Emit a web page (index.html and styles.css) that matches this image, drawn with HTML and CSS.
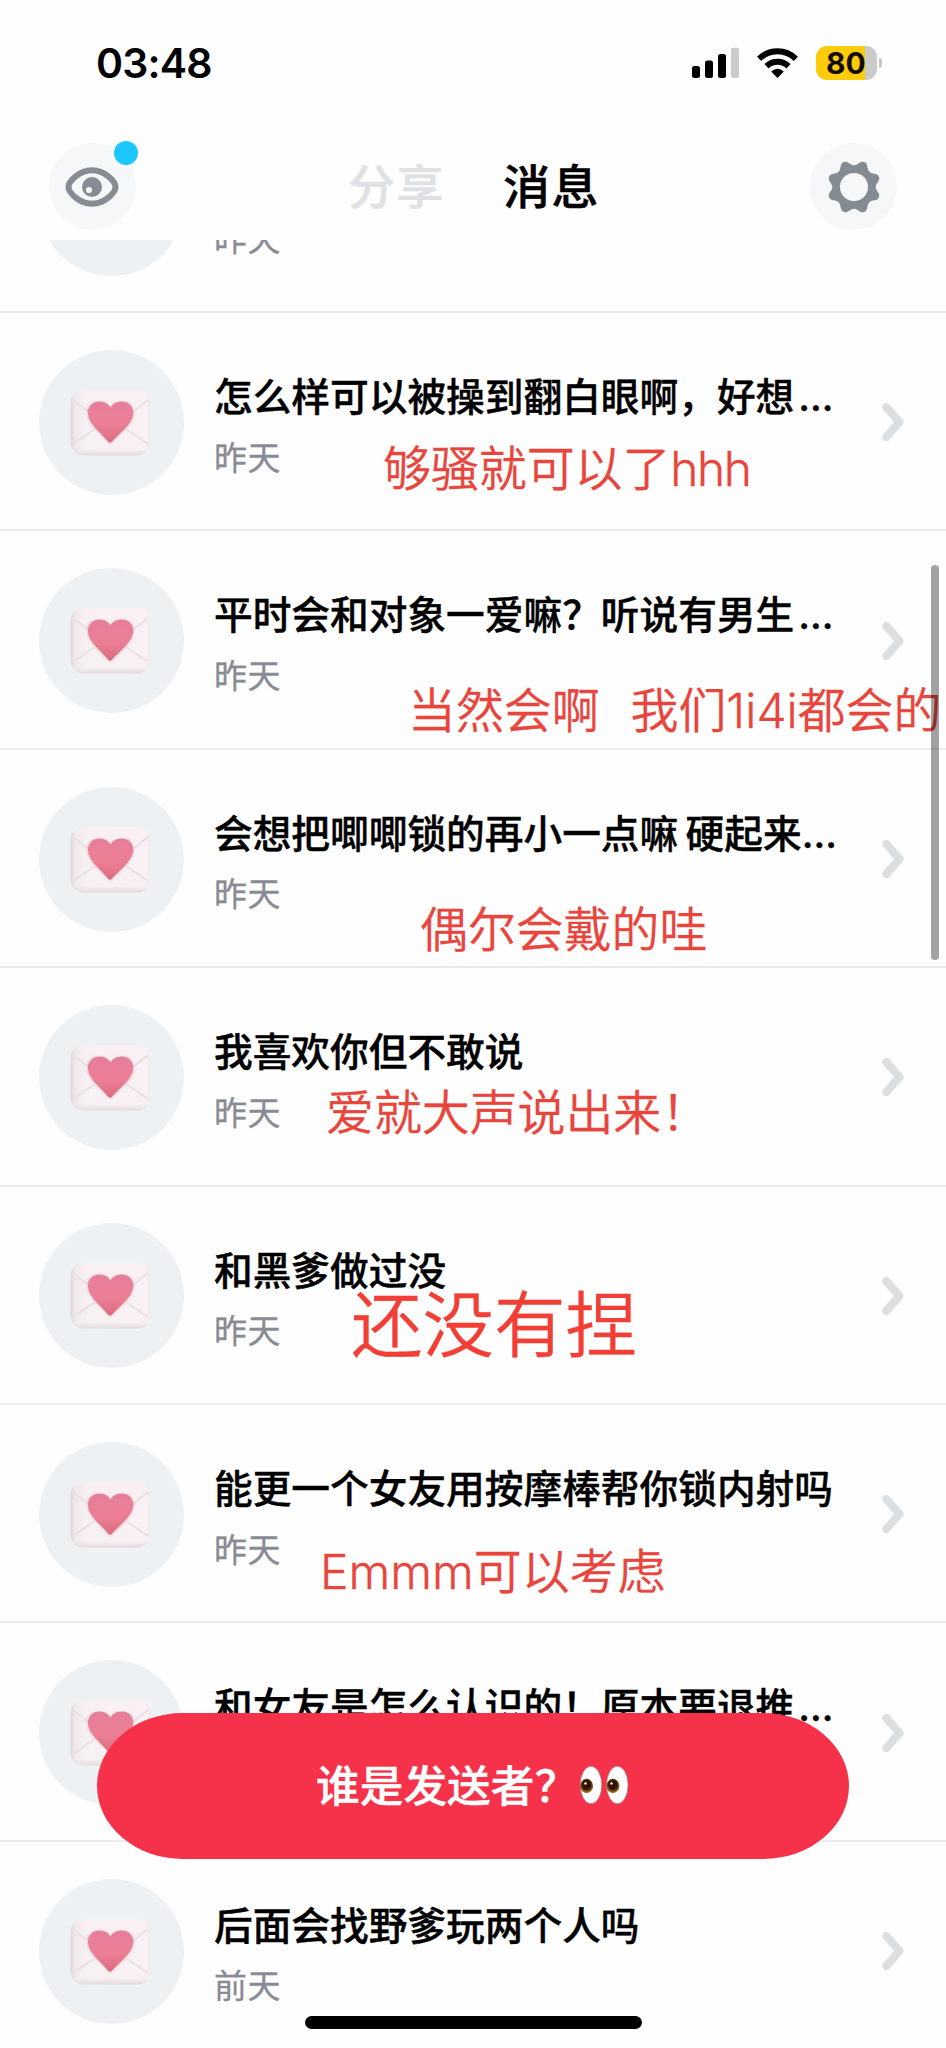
FILE: index.html
```html
<!DOCTYPE html>
<html lang="zh-CN">
<head>
<meta charset="utf-8">
<title>消息</title>
<link rel="stylesheet" href="styles.css">
</head>
<body>
<svg class="defs" width="0" height="0">
  <defs>
    <linearGradient id="paper" x1="0" y1="0" x2="0" y2="1">
      <stop offset="0" stop-color="#faf0f4"/><stop offset=".9" stop-color="#f8f1f3"/><stop offset="1" stop-color="#e2d9dc"/>
    </linearGradient>
    <linearGradient id="edge" x1="0" y1="0" x2="1" y2="0">
      <stop offset="0" stop-color="#d2cbcd" stop-opacity=".7"/><stop offset=".06" stop-color="#e6e1e3" stop-opacity=".5"/><stop offset=".25" stop-color="#f2f0f0" stop-opacity=".1"/><stop offset=".93" stop-color="#eee" stop-opacity="0"/><stop offset="1" stop-color="#e4e0e3" stop-opacity=".5"/>
    </linearGradient>
    <linearGradient id="heartfill" x1="0" y1="0" x2="0" y2="1">
      <stop offset="0" stop-color="#e67e9a"/><stop offset=".55" stop-color="#ec7f95"/><stop offset="1" stop-color="#dc6c80"/>
    </linearGradient>
    <radialGradient id="iris" cx=".5" cy=".42" r=".56">
      <stop offset="0" stop-color="#240c04"/><stop offset=".55" stop-color="#361406"/><stop offset=".8" stop-color="#7c5312"/><stop offset="1" stop-color="#a87f2a"/>
    </radialGradient>
    <filter id="soft" x="-20%" y="-20%" width="140%" height="140%"><feGaussianBlur stdDeviation="1.6"/></filter>
    <symbol id="letter" viewBox="0 0 145 145">
      <rect x="31.500" y="40" width="80" height="65.500" rx="13" fill="url(#paper)"/>
      <rect x="31.500" y="40" width="80" height="65.500" rx="13" fill="url(#edge)"/>
      <path d="M34 50L60 70M109 50L84 70M34 94L56 79M109 94L87 79" fill="none" stroke="#e8e0e3" stroke-width="1.800"/>
      <path d="M71.500 94C64 85 49 74 48.500 63.500C48 55 54 52 60 52C66 52 70 55 71.500 58.500C73 55 77 52 83 52C90 52 95 56 94.500 64C94 74 79 85 71.500 94Z" fill="#b98a94" opacity=".45" filter="url(#soft)"/>
      <path d="M73 91.500Q71 94 69 91.500C62 82.500 49.500 74.500 49 63.500C48.800 56 54 51.500 60.500 51.500C66 51.500 70 54.500 71.500 57.500C73 54.500 77 51.500 82.500 51.500C89.500 51.500 94.500 56 94.200 63.500C93.500 74.500 81 82.500 73 91.500Z" fill="url(#heartfill)"/>
    </symbol>
    <symbol id="chevron" viewBox="0 0 22 40"><path d="M4.300 5L17.500 20L4.300 35" fill="none" stroke="#dcdfe1" stroke-width="8" stroke-linecap="round" stroke-linejoin="round"/></symbol>
  </defs>
</svg>
<div class="screen">
  <header class="header">
    <div class="status">
      <span class="time">03:48</span>
      <div class="indicators">
        <svg class="signal" viewBox="0 0 48 32"><rect x="0" y="19" width="8" height="12" rx="2.500"/><rect x="13" y="13.500" width="8" height="17.500" rx="2.500"/><rect x="26" y="7" width="8" height="24" rx="2.500"/><rect x="39" y="0.700" width="8" height="30.300" rx="2.500" fill="#cbcbcb"/></svg>
        <svg class="wifi" viewBox="0 0 41 32"><g fill="none" stroke="#000" stroke-width="6"><path d="M2.200 11.800A26 26 0 0 1 38.800 11.800"/><path d="M9.500 19.200A16 16 0 0 1 31.500 19.200"/></g><path d="M14.200 24.500Q20.500 18.800 26.800 24.500L20.500 31Z"/></svg>
        <div class="battery"><span class="level">80</span></div>
      </div>
    </div>
    <nav class="nav">
      <button class="round">
        <svg class="eye" viewBox="0 0 54 40"><path d="M3.500 20C3.500 14.500 14 3.300 27 3.300S50.500 14.500 50.500 20S40 36.700 27 36.700S3.500 25.500 3.500 20Z" fill="none" stroke="#878b93" stroke-width="6" stroke-linejoin="round"/><circle cx="27" cy="20" r="10" fill="#878b93"/><circle cx="24" cy="23" r="3" fill="#f5f7f9"/></svg>
        <i class="badge"></i>
      </button>
      <div class="tabs"><span class="tab">分享</span><span class="tab active">消息</span></div>
      <button class="round">
        <svg class="gear" viewBox="-28 -28 56 56"><path d="M0,-21.700C4,-21.700 6.170,-26.660 10.330,-24.940C14.490,-23.220 12.510,-18.170 15.340,-15.340C18.170,-12.510 23.220,-14.490 24.940,-10.330C26.660,-6.170 21.700,-4 21.700,0C21.700,4 26.660,6.170 24.940,10.330C23.220,14.490 18.170,12.510 15.340,15.340C12.510,18.170 14.490,23.220 10.330,24.940C6.170,26.660 4,21.700 0,21.700C-4,21.700 -6.170,26.660 -10.330,24.940C-14.490,23.220 -12.510,18.170 -15.340,15.340C-18.170,12.510 -23.220,14.490 -24.940,10.330C-26.660,6.170 -21.700,4 -21.700,0C-21.700,-4 -26.660,-6.170 -24.940,-10.330C-23.220,-14.490 -18.170,-12.510 -15.340,-15.340C-12.510,-18.170 -14.490,-23.220 -10.330,-24.940C-6.170,-26.660 -4,-21.700 0,-21.700Z" fill="#858b93"/><circle r="14" fill="#f5f7f9"/></svg>
      </button>
    </nav>
  </header>

  <main class="list">
    <article class="row"><div class="avatar"></div><div class="body"><h2 class="title">&nbsp;</h2><p class="date">昨天</p></div></article>
    <article class="row"><div class="avatar"><svg><use href="#letter"/></svg></div><div class="body"><h2 class="title">怎么样可以被操到翻白眼啊，好想<span class="dots">…</span></h2><p class="date">昨天</p></div><svg class="chev"><use href="#chevron"/></svg><p class="note n1">够骚就可以了<span class="latin">hhh</span></p></article>
    <article class="row"><div class="avatar"><svg><use href="#letter"/></svg></div><div class="body"><h2 class="title">平时会和对象一爱嘛？听说有男生<span class="dots">…</span></h2><p class="date">昨天</p></div><svg class="chev"><use href="#chevron"/></svg><p class="note n2">当然会啊<span class="gap"></span>我们1i4i都会的</p></article>
    <article class="row"><div class="avatar"><svg><use href="#letter"/></svg></div><div class="body"><h2 class="title tight">会想把唧唧锁的再小一点嘛 硬起来…</h2><p class="date">昨天</p></div><svg class="chev"><use href="#chevron"/></svg><p class="note n3">偶尔会戴的哇</p></article>
    <article class="row"><div class="avatar"><svg><use href="#letter"/></svg></div><div class="body"><h2 class="title">我喜欢你但不敢说</h2><p class="date">昨天</p></div><svg class="chev"><use href="#chevron"/></svg><p class="note n4">爱就大声说出来！</p></article>
    <article class="row"><div class="avatar"><svg><use href="#letter"/></svg></div><div class="body"><h2 class="title">和黑爹做过没</h2><p class="date">昨天</p></div><svg class="chev"><use href="#chevron"/></svg><p class="note n5">还没有捏</p></article>
    <article class="row"><div class="avatar"><svg><use href="#letter"/></svg></div><div class="body"><h2 class="title">能更一个女友用按摩棒帮你锁内射吗</h2><p class="date">昨天</p></div><svg class="chev"><use href="#chevron"/></svg><p class="note n6">Emmm可以考虑</p></article>
    <article class="row"><div class="avatar"><svg><use href="#letter"/></svg></div><div class="body"><h2 class="title">和女友是怎么认识的！原本要退推<span class="dots">…</span></h2></div><svg class="chev"><use href="#chevron"/></svg></article>
    <article class="row"><div class="avatar"><svg><use href="#letter"/></svg></div><div class="body"><h2 class="title">后面会找野爹玩两个人吗</h2><p class="date">前天</p></div><svg class="chev"><use href="#chevron"/></svg></article>
  </main>

  <i class="scrollbar"></i>
  <button class="cta"><span>谁是发送者？</span><svg class="eyes" viewBox="0 0 50 40"><g stroke="#a8747c" stroke-width=".8"><ellipse cx="12" cy="20" rx="10.800" ry="18.800" fill="#fff"/><ellipse cx="38.300" cy="20" rx="10.800" ry="18.800" fill="#fff"/></g><ellipse cx="7.600" cy="21" rx="6.500" ry="7.200" fill="url(#iris)"/><ellipse cx="33.900" cy="21" rx="6.500" ry="7.200" fill="url(#iris)"/><circle cx="6.500" cy="18.500" r="1.200" fill="#fff"/><circle cx="32.500" cy="18.500" r="1.200" fill="#fff"/></svg></button>
  <i class="home"></i>
</div>
</body>
</html>
```

FILE: styles.css
```css
* { box-sizing: border-box; }
body, h2, p { margin: 0; }
body {
  background: #fefefe;
  color: #000;
  font-family: Inter, "Noto Sans CJK SC", sans-serif;
}
button { border: 0; padding: 0; font: inherit; }
.defs { position: absolute; }
.screen { position: relative; width: 946px; height: 2048px; overflow: hidden; }

.header { position: relative; z-index: 2; height: 240px; background: #fefefe; }
.status {
  display: flex; justify-content: space-between; align-items: center;
  height: 126px; padding: 0 69px 0 96px;
}
.time { font-size: 41px; font-weight: 600; line-height: 1; letter-spacing: -.8px; }
.indicators { display: flex; align-items: center; }
.signal { width: 48px; height: 32px; }
.wifi { width: 41px; height: 32px; margin-left: 17px; }
.battery {
  position: relative; width: 61px; height: 34px; margin-left: 18px; border-radius: 11px;
  background: linear-gradient(90deg, #fccc0a 49px, #cacaca 49px);
}
.battery::after {
  content: ""; position: absolute; left: 63px; top: 12px; width: 3px; height: 10px;
  border-radius: 0 4px 4px 0; background: #c6c6c6;
}
.level { display: block; padding-left: 10px; font-size: 30px; font-weight: 650; line-height: 34px; color: #150c00; }

.nav { display: flex; justify-content: space-between; align-items: center; height: 87px; margin-top: 17px; padding: 0 49px; }
.round {
  position: relative; display: flex; align-items: center; justify-content: center;
  width: 87px; height: 87px; border-radius: 50%; background: #f5f7f9;
}
.eye { width: 54px; height: 40px; margin-right: 1px; }
.gear { width: 56px; height: 56px; margin-left: 1px; }
.badge { position: absolute; left: 65px; top: -2.500px; width: 24px; height: 24px; border-radius: 50%; background: #1cc7ff; }
.tabs { display: flex; gap: 58px; padding-left: 2px; }
.tab { font-size: 47px; font-weight: 500; line-height: 60px; letter-spacing: 1.500px; color: #dfe2e5; -webkit-text-stroke: .5px currentColor; }
.tab.active { color: #000; }

.list { margin-top: -145.300px; }
.row {
  position: relative; display: flex; align-items: center;
  height: 218.400px; padding: 2px 42px 0 39px; border-bottom: 2px solid #ececee;
}
.avatar { width: 145px; height: 145px; border-radius: 50%; background: #edf1f4; }
.avatar svg { display: block; width: 145px; height: 145px; }
.body { align-self: flex-start; flex: 1; margin: 56px 0 0 30px; white-space: nowrap; }
.title { font-size: 38.700px; font-weight: 500; line-height: 52px; -webkit-text-stroke: .4px currentColor; }
.title.tight { word-spacing: -3px; }
.dots { margin-left: 4px; }
.date { margin-top: 12.500px; font-size: 33px; line-height: 44px; letter-spacing: .5px; color: #888b93; -webkit-text-stroke: .3px currentColor; }
.chev { width: 22px; height: 40px; }
.note { position: absolute; white-space: nowrap; font-size: 47.900px; font-weight: 350; line-height: 60px; color: #e8453c; -webkit-text-stroke: .3px currentColor; }
.n1 { left: 383px; top: 126px; }
.n2 { left: 408px; top: 150px; }
.n3 { left: 420px; top: 150.500px; }
.n4 { left: 326px; top: 115px; }
.n5 { left: 351px; top: 93.500px; font-size: 71.500px; line-height: 90px; color: #f23f35; }
.n6 { left: 320px; top: 136.500px; }
.latin { letter-spacing: -1.500px; }
.gap { display: inline-block; width: 31px; }

.scrollbar { position: absolute; left: 931px; top: 565px; width: 8px; height: 395px; border-radius: 4px; background: rgba(0, 0, 0, .36); }
.cta {
  position: absolute; z-index: 3; left: 97px; top: 1713px; width: 752px; height: 146px;
  display: flex; align-items: center; padding-left: 219px;
  border-radius: 86px / 73px; background: #f53249; color: #fff;
  font-size: 43.700px; font-weight: 500; white-space: nowrap; -webkit-text-stroke: .4px currentColor;
}
.cta span { padding-bottom: 6px; }
.eyes { width: 50px; height: 40px; margin-left: 1px; margin-bottom: 2px; }
.home { position: absolute; z-index: 3; left: 305px; top: 2016px; width: 337px; height: 12.500px; border-radius: 7px; background: #000; }
```
